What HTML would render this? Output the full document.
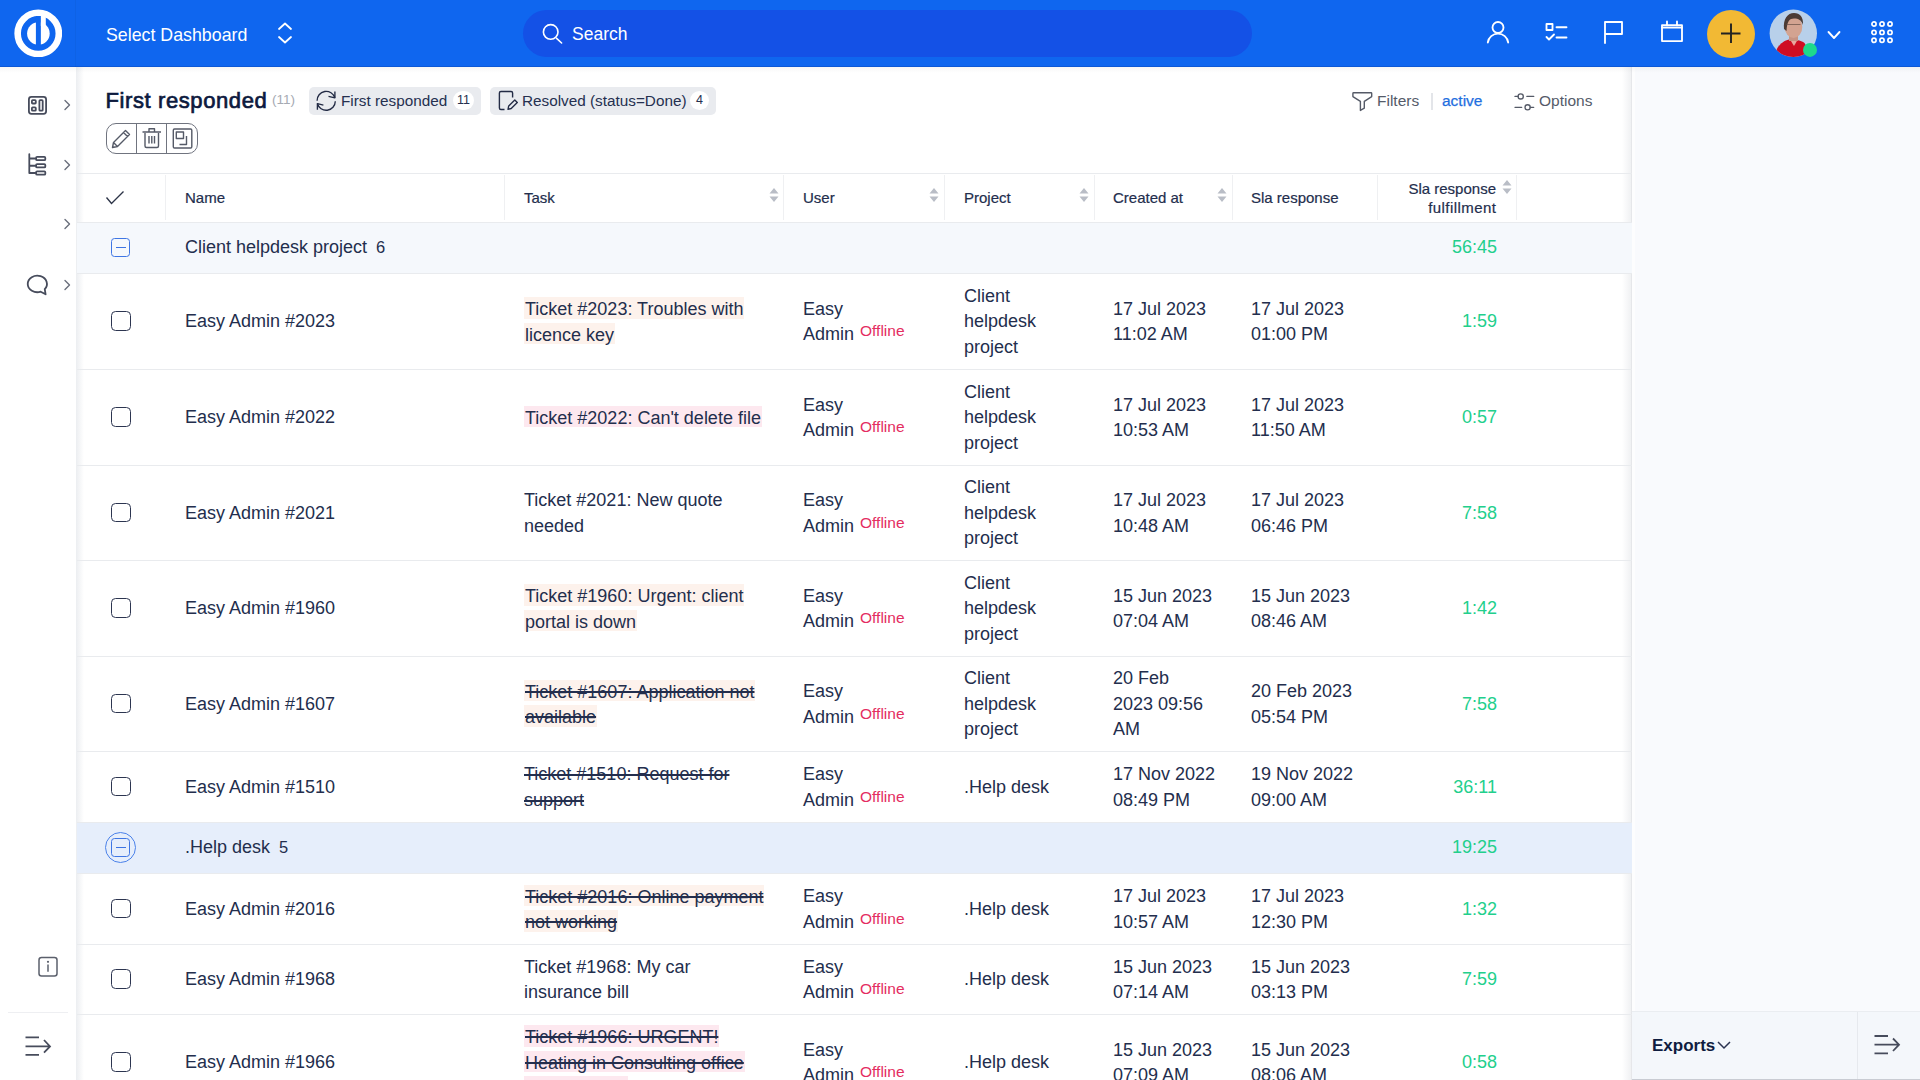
<!DOCTYPE html><html><head><meta charset="utf-8"><style>
*{margin:0;padding:0;box-sizing:border-box}
html,body{width:1920px;height:1080px;overflow:hidden;background:#fff;font-family:"Liberation Sans",sans-serif;color:#232e4d}
.a{position:absolute}
.top{left:0;top:0;width:1920px;height:67px;background:#0f66ef}
.search{left:523px;top:10px;width:729px;height:47px;border-radius:24px;background:#1451e6}
.side{left:0;top:67px;width:76px;height:1013px;background:#fff}
.sideshadow{left:76px;top:67px;width:8px;height:1013px;background:linear-gradient(to right,#eceef1,rgba(255,255,255,0))}
.rpanel{left:1632px;top:67px;width:288px;height:1013px;background:#f9fafd}
.rshadow{left:1622px;top:67px;width:9px;height:1013px;background:linear-gradient(to left,#f0f1f3,rgba(255,255,255,0))}
.hl{left:77px;width:1555px;height:1px;background:#e9ebee}
.vl{top:175px;width:1px;height:45px;background:#eff0f2}
.cell{position:absolute;display:flex;align-items:center;font-size:18px;line-height:25.5px;white-space:nowrap;padding-top:2px}
.th{position:absolute;display:flex;align-items:center;font-size:15px;white-space:nowrap;-webkit-text-stroke:0.2px #232e4d;color:#232e4d}
.cb{position:absolute;left:111px;width:19.5px;height:19.5px;border:1.7px solid #2c3550;border-radius:4.5px}
.peach span{background:#fdf2ec;padding:1.5px 1px 0 1px}
.pink span{background:#fde8ef;padding:1.5px 1px 0 1px}
.strike span{text-decoration:line-through;text-decoration-thickness:1.5px}
.off{color:#e42d61;font-size:15.5px;position:relative;top:-4px;margin-left:6px}
.green{color:#22cf8c;font-size:18px}
.sort{position:absolute;width:10px;height:16px}
</style></head><body>
<div class="a top"></div>
<div class="a" style="left:0;top:66px;width:1920px;height:1px;background:#0c58d6"></div>
<div class="a" style="left:0;top:67px;width:1920px;height:6px;background:linear-gradient(rgba(0,0,0,0.035),rgba(0,0,0,0));z-index:5"></div>
<div class="a" style="left:75px;top:0;width:1px;height:67px;background:rgba(0,0,0,0.04)"></div>
<svg class="a" style="left:14px;top:9px" width="48" height="48" viewBox="0 0 48 48">
<circle cx="24.25" cy="24.4" r="20.6" fill="none" stroke="#fff" stroke-width="6.6"/>
<circle cx="24.4" cy="24.6" r="11.3" fill="#fff"/>
<rect x="21.9" y="7" width="4.95" height="30" fill="#0f66ef"/>
<rect x="26.85" y="7" width="4.95" height="10" fill="#fff"/>
</svg>
<div class="a" style="left:106px;top:23.7px;font-size:17.8px;line-height:22px;color:#fff">Select Dashboard</div>
<svg class="a" style="left:276px;top:21px" width="18" height="24" viewBox="0 0 18 24"><path d="M3 8 L9 2.5 L15 8 M3 16 L9 21.5 L15 16" fill="none" stroke="#fff" stroke-width="1.8" stroke-linecap="round" stroke-linejoin="round"/></svg>
<div class="a search"></div>
<svg class="a" style="left:540px;top:22px" width="24" height="24" viewBox="0 0 24 24"><circle cx="10.7" cy="9.9" r="7.3" fill="none" stroke="#fff" stroke-width="1.6"/><path d="M16.6 16.3 L21.6 21" stroke="#fff" stroke-width="1.6" stroke-linecap="round"/></svg>
<div class="a" style="left:572px;top:23.2px;font-size:17.5px;line-height:22px;color:#fff">Search</div>
<svg class="a" style="left:1484px;top:18px" width="28" height="28" viewBox="0 0 28 28"><circle cx="14" cy="9.5" r="5.5" fill="none" stroke="#fff" stroke-width="1.85" stroke-linecap="round" stroke-linejoin="round"/><path d="M3.8 24.5 A10.3 10.3 0 0 1 24.2 24.5" fill="none" stroke="#fff" stroke-width="1.85" stroke-linecap="round" stroke-linejoin="round"/></svg>
<svg class="a" style="left:1542px;top:18px" width="28" height="28" viewBox="0 0 28 28"><rect x="4.5" y="6" width="6" height="6" fill="none" stroke="#fff" stroke-width="1.85" stroke-linecap="round" stroke-linejoin="round" stroke-linecap="butt" stroke-linejoin="miter"/><path d="M14.5 9.2 H24.5 M14.5 19.5 H24.5" fill="none" stroke="#fff" stroke-width="1.85" stroke-linecap="round" stroke-linejoin="round"/><path d="M4.5 19 L7 21.5 L12 16.5" fill="none" stroke="#fff" stroke-width="1.85" stroke-linecap="round" stroke-linejoin="round"/></svg>
<svg class="a" style="left:1598px;top:18px" width="28" height="28" viewBox="0 0 28 28"><path d="M7 25 V4 H24 V16 H7" fill="none" stroke="#fff" stroke-width="1.85" stroke-linecap="round" stroke-linejoin="round" stroke-linecap="butt" stroke-linejoin="miter"/></svg>
<svg class="a" style="left:1658px;top:18px" width="28" height="28" viewBox="0 0 28 28"><rect x="4" y="7.2" width="20" height="15.9" fill="none" stroke="#fff" stroke-width="1.85" stroke-linecap="round" stroke-linejoin="round" stroke-linecap="butt" stroke-linejoin="miter"/><path d="M4 9.6 H24 M9 3.5 V7.2 M19 3.5 V7.2" fill="none" stroke="#fff" stroke-width="1.85" stroke-linecap="round" stroke-linejoin="round" stroke-linecap="butt" stroke-width="1.7"/></svg>
<svg class="a" style="left:1707px;top:9.5px" width="48" height="48" viewBox="0 0 48 48"><circle cx="24" cy="24" r="24" fill="#f2b934"/><path d="M24 13.5 V33 M14 23.5 H33.5" stroke="#222" stroke-width="1.9"/></svg>
<svg class="a" style="left:1769px;top:9px" width="56" height="52" viewBox="0 0 56 52">
<defs><clipPath id="av"><circle cx="24.3" cy="24.3" r="23.7"/></clipPath><filter id="bl" x="-10%" y="-10%" width="120%" height="120%"><feGaussianBlur stdDeviation="0.6"/></filter></defs>
<g clip-path="url(#av)">
<rect x="0" y="0" width="50" height="50" fill="#b8d0ea"/>
<g filter="url(#bl)">
<path d="M5 52 L7.9 40 C11 34 16 31.5 20 30.5 L28 31 C31 31.5 34 32.5 35.5 34 L41 44 L45 52 Z" fill="#cf0f22"/>
<path d="M21 30.5 L25 37 L28.5 31 Z" fill="#e8a8a0"/>
<rect x="20" y="24" width="9" height="8" fill="#c59383"/>
<ellipse cx="24.5" cy="18" rx="8.8" ry="11" fill="#d3a391"/>
<path d="M15 20 C14 10 18.5 4 25 4 C31 4 34.5 8 34 16 C32.5 11 29.5 9.5 25 9.5 C20.5 9.5 18 12 17.5 22 Z" fill="#4b3b34"/>
<path d="M17.5 15.5 H31.5" stroke="#6a5048" stroke-width="0.9" opacity="0.8"/>
</g>
</g>
<circle cx="41" cy="40.9" r="7" fill="#1ed98c"/>
</svg>
<svg class="a" style="left:1826px;top:28.5px" width="16" height="12" viewBox="0 0 16 12"><path d="M2.5 3 L8 9 L13.5 3" fill="none" stroke="#fff" stroke-width="1.85" stroke-linecap="round" stroke-linejoin="round" stroke-width="1.6"/></svg>
<svg class="a" style="left:1869.6px;top:20px" width="24" height="25" viewBox="0 0 24 25"><circle cx="4" cy="4" r="2.1" fill="none" stroke="#fff" stroke-width="1.7"/><circle cx="4" cy="12.4" r="2.1" fill="none" stroke="#fff" stroke-width="1.7"/><circle cx="4" cy="20.3" r="2.1" fill="none" stroke="#fff" stroke-width="1.7"/><circle cx="12" cy="4" r="2.1" fill="none" stroke="#fff" stroke-width="1.7"/><circle cx="12" cy="12.4" r="2.1" fill="none" stroke="#fff" stroke-width="1.7"/><circle cx="12" cy="20.3" r="2.1" fill="none" stroke="#fff" stroke-width="1.7"/><circle cx="20" cy="4" r="2.1" fill="none" stroke="#fff" stroke-width="1.7"/><circle cx="20" cy="12.4" r="2.1" fill="none" stroke="#fff" stroke-width="1.7"/><circle cx="20" cy="20.3" r="2.1" fill="none" stroke="#fff" stroke-width="1.7"/></svg>
<div class="a side"></div>
<div class="a sideshadow"></div>
<svg class="a" style="left:26px;top:94px" width="24" height="24" viewBox="0 0 24 24"><rect x="2.9" y="2.9" width="17.2" height="16.9" rx="2.5" fill="none" stroke="#474c5c" stroke-width="1.8" stroke-linecap="round" stroke-linejoin="round"/><rect x="5.9" y="6.1" width="3.9" height="3.4" rx="0.8" fill="none" stroke="#474c5c" stroke-width="1.8" stroke-linecap="round" stroke-linejoin="round" stroke-width="1.5"/><rect x="5.9" y="13.4" width="3.9" height="3.3" rx="0.8" fill="none" stroke="#474c5c" stroke-width="1.8" stroke-linecap="round" stroke-linejoin="round" stroke-width="1.5"/><rect x="13.4" y="6.1" width="3.3" height="10.6" rx="0.8" fill="none" stroke="#474c5c" stroke-width="1.8" stroke-linecap="round" stroke-linejoin="round" stroke-width="1.5"/></svg>
<svg class="a" style="left:26px;top:153px" width="24" height="24" viewBox="0 0 24 24"><path d="M3.3 1.2 V20 H9.4 M3.3 5.5 H9.4 M3.3 12.75 H9.4" fill="none" stroke="#474c5c" stroke-width="1.8" stroke-linecap="round" stroke-linejoin="round" stroke-width="1.7"/><rect x="10.1" y="3.9" width="9.2" height="3.3" rx="1" fill="none" stroke="#474c5c" stroke-width="1.8" stroke-linecap="round" stroke-linejoin="round" stroke-width="1.5"/><rect x="10.1" y="11.1" width="9.2" height="3.3" rx="1" fill="none" stroke="#474c5c" stroke-width="1.8" stroke-linecap="round" stroke-linejoin="round" stroke-width="1.5"/><rect x="10.1" y="18.35" width="9.2" height="3.3" rx="1" fill="none" stroke="#474c5c" stroke-width="1.8" stroke-linecap="round" stroke-linejoin="round" stroke-width="1.5"/></svg>
<svg class="a" style="left:26px;top:273px" width="24" height="24" viewBox="0 0 24 24"><path d="M14.7 18.7 L19.6 21.3 L18.75 16.2 A9.6 8.3 0 1 0 14.7 18.7 Z" fill="none" stroke="#474c5c" stroke-width="1.8" stroke-linecap="round" stroke-linejoin="round" stroke-width="1.7"/></svg>
<svg class="a" style="left:62px;top:99px" width="10" height="12" viewBox="0 0 10 12"><path d="M3 1.5 L7.5 6 L3 10.5" fill="none" stroke="#6a6f7c" stroke-width="1.4" stroke-linecap="round" stroke-linejoin="round"/></svg>
<svg class="a" style="left:62px;top:158.5px" width="10" height="12" viewBox="0 0 10 12"><path d="M3 1.5 L7.5 6 L3 10.5" fill="none" stroke="#6a6f7c" stroke-width="1.4" stroke-linecap="round" stroke-linejoin="round"/></svg>
<svg class="a" style="left:62px;top:218px" width="10" height="12" viewBox="0 0 10 12"><path d="M3 1.5 L7.5 6 L3 10.5" fill="none" stroke="#6a6f7c" stroke-width="1.4" stroke-linecap="round" stroke-linejoin="round"/></svg>
<svg class="a" style="left:62px;top:278.5px" width="10" height="12" viewBox="0 0 10 12"><path d="M3 1.5 L7.5 6 L3 10.5" fill="none" stroke="#6a6f7c" stroke-width="1.4" stroke-linecap="round" stroke-linejoin="round"/></svg>
<svg class="a" style="left:36px;top:955px" width="24" height="24" viewBox="0 0 24 24"><rect x="3" y="2.5" width="18" height="18.5" rx="2.5" fill="none" stroke="#5b606c" stroke-width="1.5"/><circle cx="12" cy="6.8" r="1.1" fill="#5b606c"/><path d="M12 9.5 V16.8" stroke="#5b606c" stroke-width="1.5"/></svg>
<div class="a" style="left:8px;top:1012px;width:60px;height:1px;background:#eeeff2"></div>
<svg class="a" style="left:23px;top:1034px" width="30" height="24" viewBox="0 0 30 24"><path d="M2.5 3.3 H16 M2.5 12.4 H27 M2.5 20.8 H16 M21 6 L27 12.4 L21 18.6" fill="none" stroke="#474c5c" stroke-width="1.8" stroke-linecap="butt" stroke-linejoin="miter"/></svg>
<div class="a rshadow"></div>
<div class="a rpanel"></div>
<div class="a" style="left:1631px;top:67px;width:1px;height:1013px;background:#e6e7ea"></div>
<div class="a" style="left:1632px;top:67px;width:3px;height:1013px;background:#fdfdfe"></div>
<div class="a" style="left:1632px;top:1011px;width:288px;height:69px;background:#f4f7fb;border-top:1px solid #eaedf1"></div>
<div class="a" style="left:1857px;top:1012px;width:1px;height:68px;background:#e6e9ee"></div>
<div class="a" style="left:1652px;top:1035.5px;font-size:17px;line-height:20px;font-weight:bold;color:#0f1c3f">Exports</div>
<svg class="a" style="left:1716px;top:1040px" width="16" height="10" viewBox="0 0 16 10"><path d="M2 2 L8 8 L14 2" fill="none" stroke="#2a3350" stroke-width="1.5"/></svg>
<svg class="a" style="left:1872px;top:1033px" width="30" height="24" viewBox="0 0 30 24"><path d="M2.5 3 H16 M2.5 11.7 H27 M2.5 20.3 H16 M21 5.5 L27 11.7 L21 18" fill="none" stroke="#474c5c" stroke-width="1.8"/></svg>
<div class="a" style="left:1632px;top:1079px;width:288px;height:1px;background:#c9ccd3"></div>
<div class="a" style="left:105.5px;top:87px;font-size:22px;line-height:28px;letter-spacing:0.6px;-webkit-text-stroke:0.7px #0d1a3e;color:#0d1a3e">First responded</div>
<div class="a" style="left:272px;top:91px;font-size:13.5px;line-height:18px;color:#a6aab3">(11)</div>
<div class="a" style="left:309px;top:87px;width:172px;height:28px;border-radius:5px;background:#e9ebef"></div>
<svg class="a" style="left:314px;top:89px" width="24" height="24" viewBox="0 0 24 24"><path d="M3.1 11.8 A9.1 9.1 0 0 1 20.9 8.8 M21.3 12.3 A9.1 9.1 0 0 1 3.4 14.5" fill="none" stroke="#232b45" stroke-width="1.35"/><path d="M20.9 2.6 V8.8 L14.5 7.4 M3.4 20.8 V14.6 L9.4 16.2" fill="none" stroke="#232b45" stroke-width="1.35" stroke-linejoin="round"/></svg>
<div class="a" style="left:341px;top:92px;font-size:15.3px;line-height:18px;color:#253050">First responded</div>
<div class="a" style="left:453px;top:91px;width:21px;height:19px;border-radius:10px;background:#fff;font-size:12.5px;line-height:19px;text-align:center;color:#253050">11</div>
<div class="a" style="left:490px;top:87px;width:226px;height:28px;border-radius:5px;background:#e9ebef"></div>
<svg class="a" style="left:496px;top:89px" width="24" height="24" viewBox="0 0 24 24"><path d="M8.5 20.5 H4.9 Q3.4 20.5 3.4 19 V4 Q3.4 2.5 4.9 2.5 H15.1 Q16.6 2.5 16.6 4 V8.5" fill="none" stroke="#232b45" stroke-width="1.4"/><path d="M12 20.3 L12.7 17 L18.8 10.9 L21.3 13.4 L15.2 19.5 Z" fill="none" stroke="#232b45" stroke-width="1.35" stroke-linejoin="round"/></svg>
<div class="a" style="left:522px;top:92px;font-size:15.3px;line-height:18px;color:#253050">Resolved (status=Done)</div>
<div class="a" style="left:690px;top:91px;width:19px;height:19px;border-radius:10px;background:#fff;font-size:12.5px;line-height:19px;text-align:center;color:#253050">4</div>
<div class="a" style="left:106px;top:123px;width:92px;height:31px;border:1.5px solid #70747f;border-radius:10px"></div>
<div class="a" style="left:135.5px;top:123px;width:1.2px;height:31px;background:#70747f"></div>
<div class="a" style="left:166px;top:123px;width:1.2px;height:31px;background:#70747f"></div>
<svg class="a" style="left:109px;top:127px" width="24" height="24" viewBox="0 0 24 24"><path d="M3.5 20.5 L4.5 15.5 L16.5 3.5 L20.5 7.5 L8.5 19.5 Z M14.5 5.5 L18.5 9.5 M4.5 15.5 L8.5 19.5" fill="none" stroke="#555a67" stroke-width="1.4" stroke-linejoin="round"/></svg>
<svg class="a" style="left:140px;top:126px" width="24" height="24" viewBox="0 0 24 24"><path d="M2.5 6 H21 M9 6 V2.8 H14.5 V6 M5 7 V20 Q5 21.5 6.5 21.5 H17 Q18.5 21.5 18.5 20 V7 M9 10 V17.5 M11.8 10 V17.5 M14.5 10 V17.5" fill="none" stroke="#555a67" stroke-width="1.4" stroke-linejoin="round"/></svg>
<svg class="a" style="left:170px;top:126px" width="24" height="24" viewBox="0 0 24 24"><rect x="3.3" y="3" width="18.5" height="19" rx="1.2" fill="none" stroke="#555a67" stroke-width="1.4" stroke-linejoin="round"/><path d="M6.3 6 H13.5 V12.5 H6.3 Z M16.5 10 V18.5 H9.5" fill="none" stroke="#555a67" stroke-width="1.4" stroke-linejoin="round"/></svg>
<svg class="a" style="left:1351px;top:91px" width="22" height="22" viewBox="0 0 22 22"><path d="M2.6 1.8 H20 Q20.7 1.8 20.7 2.5 V5.6 L13.3 10.3 V17.2 L9.4 19.4 V10.3 L1.9 5.6 V2.5 Q1.9 1.8 2.6 1.8 Z" fill="none" stroke="#555a67" stroke-width="1.4" stroke-linejoin="round"/></svg>
<div class="a" style="left:1377px;top:92px;font-size:15.5px;line-height:18px;color:#555b69">Filters</div>
<div class="a" style="left:1431px;top:93px;width:1.5px;height:17px;background:#e3e5e9"></div>
<div class="a" style="left:1442px;top:92px;font-size:15.5px;line-height:18px;color:#1f6fe0;-webkit-text-stroke:0.25px #1f6fe0">active</div>
<svg class="a" style="left:1513px;top:91px" width="22" height="22" viewBox="0 0 22 22"><circle cx="7.7" cy="5.4" r="2.6" fill="none" stroke="#555a67" stroke-width="1.35"/><circle cx="14.6" cy="16.3" r="2.6" fill="none" stroke="#555a67" stroke-width="1.35"/><path d="M2 5.4 H5.1 M13.9 5.4 H20.7 M2 16.3 H8.7 M17.2 16.3 H20.7" stroke="#555a67" stroke-width="1.35" stroke-linecap="round"/></svg>
<div class="a" style="left:1539px;top:92px;font-size:15.5px;line-height:18px;color:#555b69">Options</div>
<div class="a hl" style="top:173px"></div>
<div class="a hl" style="top:222px"></div>
<div class="a vl" style="left:165px"></div>
<div class="a vl" style="left:504px"></div>
<div class="a vl" style="left:783px"></div>
<div class="a vl" style="left:944px"></div>
<div class="a vl" style="left:1094px"></div>
<div class="a vl" style="left:1232px"></div>
<div class="a vl" style="left:1377px"></div>
<div class="a vl" style="left:1516px"></div>
<svg class="a" style="left:104px;top:188px" width="22" height="18" viewBox="0 0 22 18"><path d="M2.5 9.5 L7.5 15.5 L19.5 3.5" fill="none" stroke="#2c3447" stroke-width="1.35"/></svg>
<div class="th" style="left:185px;top:173px;height:48px">Name</div>
<div class="th" style="left:524px;top:173px;height:48px">Task</div>
<div class="th" style="left:803px;top:173px;height:48px">User</div>
<div class="th" style="left:964px;top:173px;height:48px">Project</div>
<div class="th" style="left:1113px;top:173px;height:48px">Created at</div>
<div class="th" style="left:1251px;top:173px;height:48px">Sla response</div>
<div class="a" style="left:1377px;top:179px;width:119px;font-size:15px;line-height:19px;text-align:right;-webkit-text-stroke:0.2px #232e4d">Sla response<br><span style="letter-spacing:0.45px;margin-right:-0.45px">fulfillment</span></div>
<svg class="sort" style="left:769px;top:187px" viewBox="0 0 10 16"><path d="M5 1 L9.5 6.5 H0.5 Z M5 15 L9.5 9.5 H0.5 Z" fill="#b9bdc6"/></svg>
<svg class="sort" style="left:929px;top:187px" viewBox="0 0 10 16"><path d="M5 1 L9.5 6.5 H0.5 Z M5 15 L9.5 9.5 H0.5 Z" fill="#b9bdc6"/></svg>
<svg class="sort" style="left:1079px;top:187px" viewBox="0 0 10 16"><path d="M5 1 L9.5 6.5 H0.5 Z M5 15 L9.5 9.5 H0.5 Z" fill="#b9bdc6"/></svg>
<svg class="sort" style="left:1217px;top:187px" viewBox="0 0 10 16"><path d="M5 1 L9.5 6.5 H0.5 Z M5 15 L9.5 9.5 H0.5 Z" fill="#b9bdc6"/></svg>
<svg class="sort" style="left:1501.5px;top:179px" viewBox="0 0 10 16"><path d="M5 1 L9.5 6.5 H0.5 Z M5 15 L9.5 9.5 H0.5 Z" fill="#b9bdc6"/></svg>
<div class="a" style="left:77px;top:223px;width:1555px;height:50px;background:#f5f8fc"></div>
<div class="a" style="left:111.3px;top:238.0px;width:19px;height:19px;border:1.7px solid #3f76e4;border-radius:3.5px"></div>
<div class="a" style="left:116px;top:246.7px;width:9.5px;height:1.6px;background:#3d74e2"></div>
<div class="cell" style="left:185px;top:222px;height:51px;padding-top:0">Client helpdesk project<span style="font-size:16.5px;margin-left:9px">6</span></div>
<div class="cell green" style="left:1300px;width:197px;justify-content:flex-end;top:222px;height:51px;padding-top:0">56:45</div>
<div class="a hl" style="top:273px"></div>
<div class="a" style="left:77px;top:823px;width:1555px;height:50px;background:#e6eefb"></div>
<div class="a" style="left:105px;top:832.0px;width:31px;height:31px;border-radius:50%;border:1.9px solid #4b82ea"></div>
<div class="a" style="left:111.3px;top:838.0px;width:19px;height:19px;border:1.7px solid #3f76e4;border-radius:3.5px"></div>
<div class="a" style="left:116px;top:846.7px;width:9.5px;height:1.6px;background:#3d74e2"></div>
<div class="cell" style="left:185px;top:822px;height:51px;padding-top:0">.Help desk<span style="font-size:16.5px;margin-left:9px">5</span></div>
<div class="cell green" style="left:1300px;width:197px;justify-content:flex-end;top:822px;height:51px;padding-top:0">19:25</div>
<div class="a hl" style="top:873px"></div>
<div class="cb" style="top:311.0px"></div>
<div class="cell" style="left:185px;top:273px;height:96px">Easy Admin #2023</div>
<div class="cell peach" style="left:524px;top:273px;height:96px"><div><span class="t">Ticket #2023: Troubles with</span><br><span class="t">licence key</span></div></div>
<div class="cell" style="left:803px;top:273px;height:96px"><div>Easy<br>Admin<span class="off">Offline</span></div></div>
<div class="cell" style="left:964px;top:273px;height:96px"><div>Client<br>helpdesk<br>project</div></div>
<div class="cell" style="left:1113px;top:273px;height:96px"><div>17 Jul 2023<br>11:02 AM</div></div>
<div class="cell" style="left:1251px;top:273px;height:96px"><div>17 Jul 2023<br>01:00 PM</div></div>
<div class="cell green" style="left:1300px;width:197px;justify-content:flex-end;top:273px;height:96px">1:59</div>
<div class="a hl" style="top:369px"></div>
<div class="cb" style="top:407.0px"></div>
<div class="cell" style="left:185px;top:369px;height:96px">Easy Admin #2022</div>
<div class="cell pink" style="left:524px;top:369px;height:96px"><div><span class="t">Ticket #2022: Can't delete file</span></div></div>
<div class="cell" style="left:803px;top:369px;height:96px"><div>Easy<br>Admin<span class="off">Offline</span></div></div>
<div class="cell" style="left:964px;top:369px;height:96px"><div>Client<br>helpdesk<br>project</div></div>
<div class="cell" style="left:1113px;top:369px;height:96px"><div>17 Jul 2023<br>10:53 AM</div></div>
<div class="cell" style="left:1251px;top:369px;height:96px"><div>17 Jul 2023<br>11:50 AM</div></div>
<div class="cell green" style="left:1300px;width:197px;justify-content:flex-end;top:369px;height:96px">0:57</div>
<div class="a hl" style="top:465px"></div>
<div class="cb" style="top:502.5px"></div>
<div class="cell" style="left:185px;top:465px;height:95px">Easy Admin #2021</div>
<div class="cell none" style="left:524px;top:465px;height:95px"><div><span class="t">Ticket #2021: New quote</span><br><span class="t">needed</span></div></div>
<div class="cell" style="left:803px;top:465px;height:95px"><div>Easy<br>Admin<span class="off">Offline</span></div></div>
<div class="cell" style="left:964px;top:465px;height:95px"><div>Client<br>helpdesk<br>project</div></div>
<div class="cell" style="left:1113px;top:465px;height:95px"><div>17 Jul 2023<br>10:48 AM</div></div>
<div class="cell" style="left:1251px;top:465px;height:95px"><div>17 Jul 2023<br>06:46 PM</div></div>
<div class="cell green" style="left:1300px;width:197px;justify-content:flex-end;top:465px;height:95px">7:58</div>
<div class="a hl" style="top:560px"></div>
<div class="cb" style="top:598.0px"></div>
<div class="cell" style="left:185px;top:560px;height:96px">Easy Admin #1960</div>
<div class="cell peach" style="left:524px;top:560px;height:96px"><div><span class="t">Ticket #1960: Urgent: client</span><br><span class="t">portal is down</span></div></div>
<div class="cell" style="left:803px;top:560px;height:96px"><div>Easy<br>Admin<span class="off">Offline</span></div></div>
<div class="cell" style="left:964px;top:560px;height:96px"><div>Client<br>helpdesk<br>project</div></div>
<div class="cell" style="left:1113px;top:560px;height:96px"><div>15 Jun 2023<br>07:04 AM</div></div>
<div class="cell" style="left:1251px;top:560px;height:96px"><div>15 Jun 2023<br>08:46 AM</div></div>
<div class="cell green" style="left:1300px;width:197px;justify-content:flex-end;top:560px;height:96px">1:42</div>
<div class="a hl" style="top:656px"></div>
<div class="cb" style="top:693.5px"></div>
<div class="cell" style="left:185px;top:656px;height:95px">Easy Admin #1607</div>
<div class="cell peach strike" style="left:524px;top:656px;height:95px"><div><span class="t">Ticket #1607: Application not</span><br><span class="t">available</span></div></div>
<div class="cell" style="left:803px;top:656px;height:95px"><div>Easy<br>Admin<span class="off">Offline</span></div></div>
<div class="cell" style="left:964px;top:656px;height:95px"><div>Client<br>helpdesk<br>project</div></div>
<div class="cell" style="left:1113px;top:656px;height:95px"><div>20 Feb<br>2023 09:56<br>AM</div></div>
<div class="cell" style="left:1251px;top:656px;height:95px"><div>20 Feb 2023<br>05:54 PM</div></div>
<div class="cell green" style="left:1300px;width:197px;justify-content:flex-end;top:656px;height:95px">7:58</div>
<div class="a hl" style="top:751px"></div>
<div class="cb" style="top:776.5px"></div>
<div class="cell" style="left:185px;top:751px;height:71px">Easy Admin #1510</div>
<div class="cell strike" style="left:524px;top:751px;height:71px"><div><span class="t">Ticket #1510: Request for</span><br><span class="t">support</span></div></div>
<div class="cell" style="left:803px;top:751px;height:71px"><div>Easy<br>Admin<span class="off">Offline</span></div></div>
<div class="cell" style="left:964px;top:751px;height:71px"><div>.Help desk</div></div>
<div class="cell" style="left:1113px;top:751px;height:71px"><div>17 Nov 2022<br>08:49 PM</div></div>
<div class="cell" style="left:1251px;top:751px;height:71px"><div>19 Nov 2022<br>09:00 AM</div></div>
<div class="cell green" style="left:1300px;width:197px;justify-content:flex-end;top:751px;height:71px">36:11</div>
<div class="a hl" style="top:822px"></div>
<div class="cb" style="top:898.5px"></div>
<div class="cell" style="left:185px;top:873px;height:71px">Easy Admin #2016</div>
<div class="cell peach strike" style="left:524px;top:873px;height:71px"><div><span class="t">Ticket #2016: Online payment</span><br><span class="t">not working</span></div></div>
<div class="cell" style="left:803px;top:873px;height:71px"><div>Easy<br>Admin<span class="off">Offline</span></div></div>
<div class="cell" style="left:964px;top:873px;height:71px"><div>.Help desk</div></div>
<div class="cell" style="left:1113px;top:873px;height:71px"><div>17 Jul 2023<br>10:57 AM</div></div>
<div class="cell" style="left:1251px;top:873px;height:71px"><div>17 Jul 2023<br>12:30 PM</div></div>
<div class="cell green" style="left:1300px;width:197px;justify-content:flex-end;top:873px;height:71px">1:32</div>
<div class="a hl" style="top:944px"></div>
<div class="cb" style="top:969.0px"></div>
<div class="cell" style="left:185px;top:944px;height:70px">Easy Admin #1968</div>
<div class="cell none" style="left:524px;top:944px;height:70px"><div><span class="t">Ticket #1968: My car</span><br><span class="t">insurance bill</span></div></div>
<div class="cell" style="left:803px;top:944px;height:70px"><div>Easy<br>Admin<span class="off">Offline</span></div></div>
<div class="cell" style="left:964px;top:944px;height:70px"><div>.Help desk</div></div>
<div class="cell" style="left:1113px;top:944px;height:70px"><div>15 Jun 2023<br>07:14 AM</div></div>
<div class="cell" style="left:1251px;top:944px;height:70px"><div>15 Jun 2023<br>03:13 PM</div></div>
<div class="cell green" style="left:1300px;width:197px;justify-content:flex-end;top:944px;height:70px">7:59</div>
<div class="a hl" style="top:1014px"></div>
<div class="cb" style="top:1052.0px"></div>
<div class="cell" style="left:185px;top:1014px;height:96px">Easy Admin #1966</div>
<div class="cell pink strike" style="left:524px;top:1014px;height:96px"><div><span class="t">Ticket #1966: URGENT!</span><br><span class="t">Heating in Consulting office</span><br><span class="t">doesnt work!</span></div></div>
<div class="cell" style="left:803px;top:1014px;height:96px"><div>Easy<br>Admin<span class="off">Offline</span></div></div>
<div class="cell" style="left:964px;top:1014px;height:96px"><div>.Help desk</div></div>
<div class="cell" style="left:1113px;top:1014px;height:96px"><div>15 Jun 2023<br>07:09 AM</div></div>
<div class="cell" style="left:1251px;top:1014px;height:96px"><div>15 Jun 2023<br>08:06 AM</div></div>
<div class="cell green" style="left:1300px;width:197px;justify-content:flex-end;top:1014px;height:96px">0:58</div>
</body></html>
